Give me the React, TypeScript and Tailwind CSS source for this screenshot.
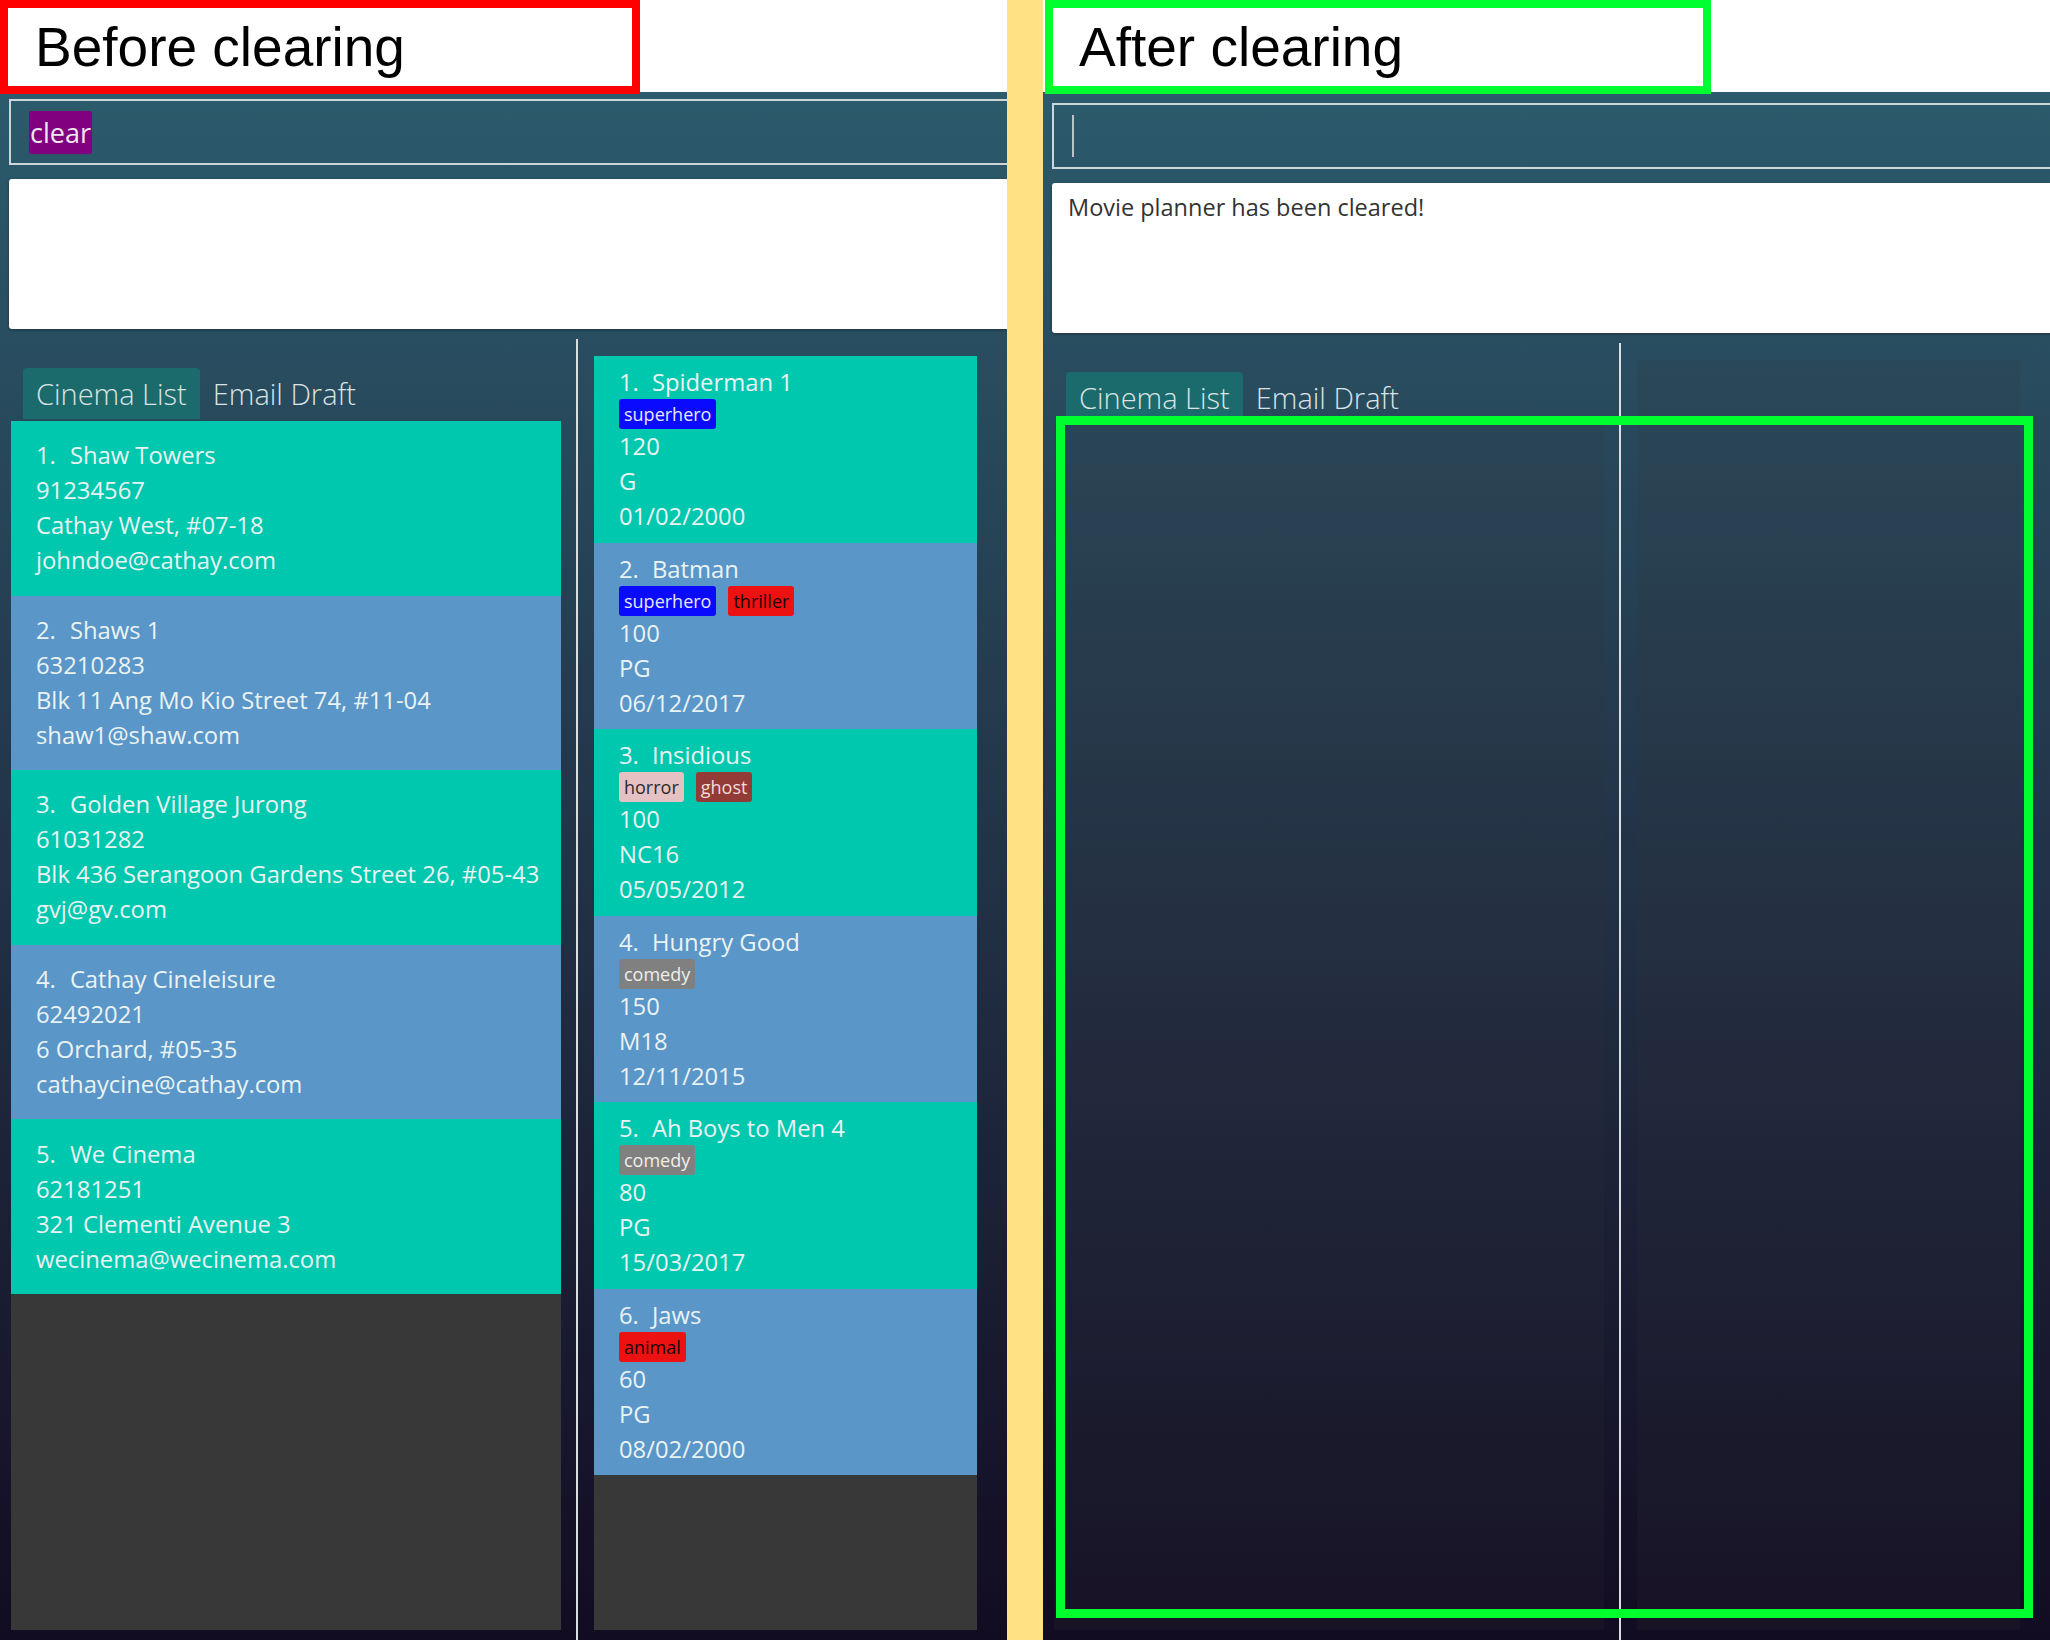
import React from "react";

interface Cinema {
  name: string;
  phone: string;
  address: string;
  email: string;
}

interface Movie {
  title: string;
  tags: string[];
  duration: string;
  rating: string;
  date: string;
}

const cinemas: Cinema[] = [
  { name: "Shaw Towers", phone: "91234567", address: "Cathay West, #07-18", email: "johndoe@cathay.com" },
  { name: "Shaws 1", phone: "63210283", address: "Blk 11 Ang Mo Kio Street 74, #11-04", email: "shaw1@shaw.com" },
  { name: "Golden Village Jurong", phone: "61031282", address: "Blk 436 Serangoon Gardens Street 26, #05-43", email: "gvj@gv.com" },
  { name: "Cathay Cineleisure", phone: "62492021", address: "6 Orchard, #05-35", email: "cathaycine@cathay.com" },
  { name: "We Cinema", phone: "62181251", address: "321 Clementi Avenue 3", email: "wecinema@wecinema.com" },
];

const movies: Movie[] = [
  { title: "Spiderman 1", tags: ["superhero"], duration: "120", rating: "G", date: "01/02/2000" },
  { title: "Batman", tags: ["superhero", "thriller"], duration: "100", rating: "PG", date: "06/12/2017" },
  { title: "Insidious", tags: ["horror", "ghost"], duration: "100", rating: "NC16", date: "05/05/2012" },
  { title: "Hungry Good", tags: ["comedy"], duration: "150", rating: "M18", date: "12/11/2015" },
  { title: "Ah Boys to Men 4", tags: ["comedy"], duration: "80", rating: "PG", date: "15/03/2017" },
  { title: "Jaws", tags: ["animal"], duration: "60", rating: "PG", date: "08/02/2000" },
];

const tagColors: Record<string, string> = {
  superhero: "bg-[#0a0aff] text-[#e6e6ff]",
  thriller: "bg-[#ee1111] text-[#1c0404]",
  horror: "bg-[#e6c1c4] text-[#2a2a2a]",
  ghost: "bg-[#933b36] text-[#f2dcd6]",
  comedy: "bg-[#808080] text-[#efefe8]",
  animal: "bg-[#ee1111] text-[#1c0404]",
};

function CinemaCard({ c, i }: { c: Cinema; i: number }) {
  return (
    <div className={`flex h-[174.6px] flex-col justify-center pl-[25px] text-[23.8px] leading-[35px] text-[#eaf3f3] ${i % 2 === 0 ? "bg-[#00c8ae]" : "bg-[#5b96c8]"}`}>
      <div>
        <span>{i + 1}.</span>
        <span className="ml-[14px]">{c.name}</span>
      </div>
      <div>{c.phone}</div>
      <div>{c.address}</div>
      <div>{c.email}</div>
    </div>
  );
}

function MovieCard({ m, i }: { m: Movie; i: number }) {
  return (
    <div className={`h-[186.5px] pl-[25px] pt-[11px] text-[23.8px] text-[#eaf3f3] ${i % 2 === 0 ? "bg-[#00c8ae]" : "bg-[#5b96c8]"}`}>
      <div className="leading-[30px]">
        <span>{i + 1}.</span>
        <span className="ml-[13px]">{m.title}</span>
      </div>
      <div className="mt-[2px] flex h-[30px] gap-[12px]">
        {m.tags.map((t) => (
          <span key={t} className={`rounded-[3px] px-[5px] text-[18px] leading-[30px] ${tagColors[t]}`}>
            {t}
          </span>
        ))}
      </div>
      <div className="leading-[35px]">{m.duration}</div>
      <div className="leading-[35px]">{m.rating}</div>
      <div className="leading-[35px]">{m.date}</div>
    </div>
  );
}

function Pane({ cleared }: { cleared: boolean }) {
  const listBg = cleared ? "bg-[rgba(56,56,56,0.15)]" : "bg-[#383838]";
  return (
    <div className="flex flex-1 flex-col overflow-hidden bg-linear-to-b from-[#2b5b6c] via-[#223247] to-[#120c22] font-['Open_Sans',sans-serif]">
      <div className={`ml-[9px] mr-[-12px] flex h-[66px] shrink-0 items-center border-2 border-[#cdd6da] pl-[18px] ${cleared ? "mt-[11px]" : "mt-[7px]"}`}>
        {cleared ? (
          <div className="h-[42px] w-[2px] bg-[#b8c4ca]" />
        ) : (
          <span className="rounded-[2px] bg-[#800080] px-[1px] text-[27px] leading-[43px] text-[#f2e6f2]">clear</span>
        )}
      </div>
      <div className="ml-[9px] mr-[-12px] mt-[14px] h-[150px] shrink-0 rounded-[3px] bg-white px-[16px] pt-[9px] text-[23.5px] leading-[30px] text-[#333333] shadow-[0_1px_3px_rgba(0,0,0,0.35)]">
        {cleared ? "Movie planner has been cleared!" : null}
      </div>
      <div className="mt-[10px] flex min-h-0 flex-1">
        <div className="ml-[11px] flex w-[550px] flex-col pb-[10px] pt-[29px]">
          <div className="flex h-[51px] shrink-0 pl-[12px] text-[29px] font-light leading-[51px] text-[#dbe3e5]">
            <div className="rounded-t-[4px] bg-[#1b6a6c] px-[13px]">Cinema List</div>
            <div className="ml-[13px]">Email Draft</div>
          </div>
          <div className={`mt-[2px] flex-1 overflow-hidden ${listBg}`}>
            {!cleared && cinemas.map((c, i) => <CinemaCard key={c.name} c={c} i={i} />)}
          </div>
        </div>
        <div className="ml-[15px] w-[2px] bg-[#d9dee0]" />
        <div className={`mb-[10px] ml-[16px] mt-[17px] w-[383px] overflow-hidden ${listBg}`}>
          {!cleared && movies.map((m, i) => <MovieCard key={m.title} m={m} i={i} />)}
        </div>
      </div>
    </div>
  );
}

export default function App() {
  return (
    <div className="flex h-[1640px] w-[2050px] overflow-hidden bg-white">
      <div className="flex w-[1007px] flex-col">
        <div className="h-[92px] shrink-0">
          <div className="relative z-10 flex h-[94px] w-[640px] items-center border-[8px] border-[#ff0000] bg-white pl-[27px] font-['Liberation_Sans',Arial,sans-serif] text-[55px] leading-none text-black">
            Before clearing
          </div>
        </div>
        <Pane cleared={false} />
      </div>
      <div className="w-[36px] shrink-0 bg-[#fee283]" />
      <div className="relative flex flex-1 flex-col">
        <div className="h-[92px] shrink-0">
          <div className="relative z-10 ml-[2px] flex h-[94px] w-[666px] items-center border-[8px] border-[#00ff2e] bg-white pl-[26px] font-['Liberation_Sans',Arial,sans-serif] text-[55px] leading-none text-black">
            After clearing
          </div>
        </div>
        <Pane cleared={true} />
        <div className="absolute left-[13px] top-[416px] h-[1202px] w-[977px] border-[9px] border-[#00ff2e]" />
      </div>
    </div>
  );
}
